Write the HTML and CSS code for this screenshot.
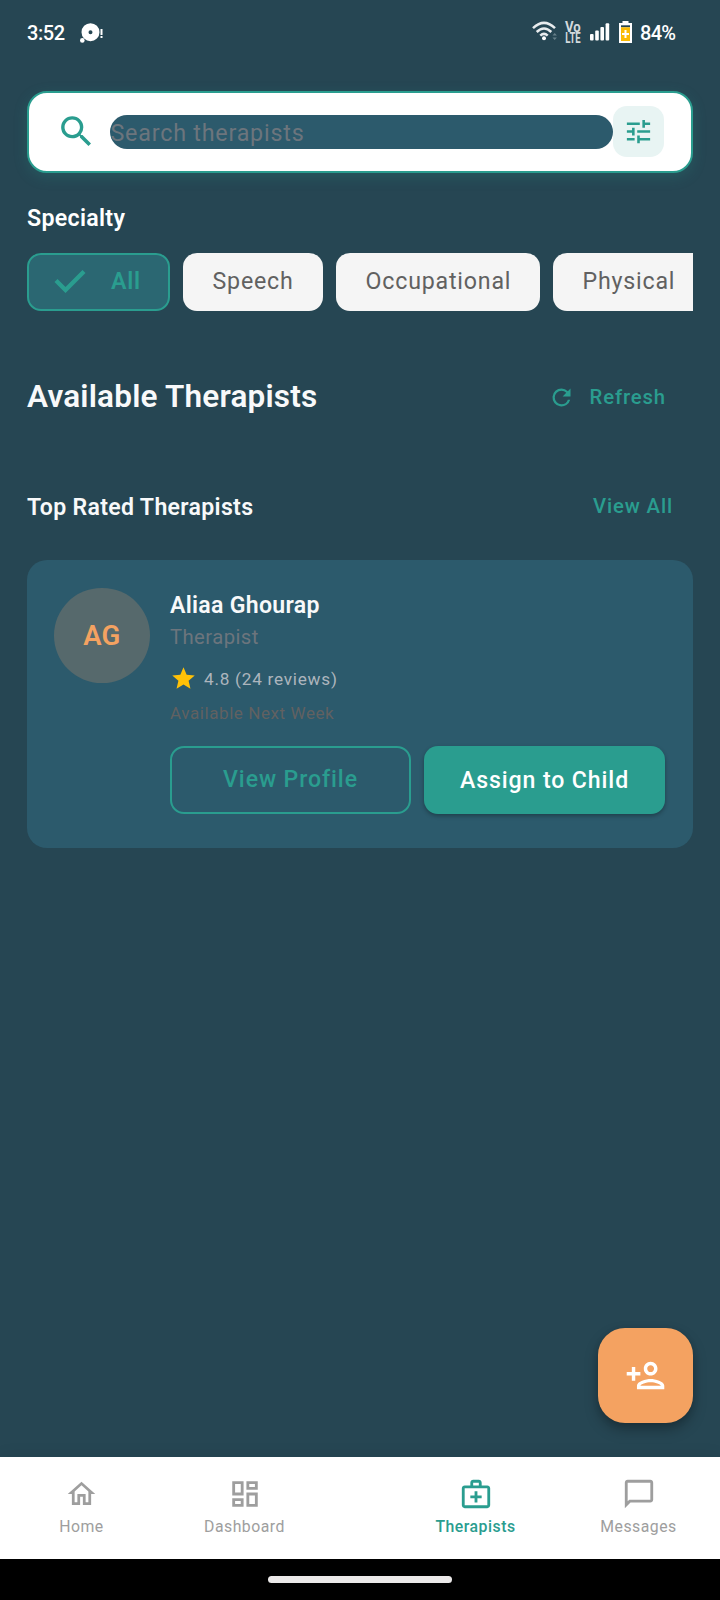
FILE: index.html
```
<!DOCTYPE html>
<html lang="en">
<head>
<meta charset="utf-8">
<title>Therapists</title>
<link rel="stylesheet" href="styles.css">
</head>
<body>
<div class="screen">
  <header class="status">
    <span class="time">3:52</span>
    <svg class="notif" width="26" height="22" viewBox="0 0 26 22" fill="#fff"><path fill-rule="evenodd" d="M10.500 1.200a9 9 0 1 1 0 18a9 9 0 1 1 0-18zm0 7a2 2 0 1 0 0 4a2 2 0 1 0 0-4z"/><circle cx="2.300" cy="18.400" r="2.300"/><path d="M20.500 7h2v6h-2zM20.500 14h2v2h-2z"/></svg>
    <span class="grow"></span>
    <svg class="wifi" width="26" height="22" viewBox="0 0 26 22" fill="none" stroke="#e8ecee" stroke-width="2.500"><path d="M1 7.200Q12 -3.500 23 7.200M4.700 11Q12 4 19.300 11M8.300 14.700Q12 11 15.700 14.700"/><circle cx="12" cy="17.200" r="2" fill="#fff" stroke="none"/><path d="M20.500 14.500L22.700 12l2.200 2.500zM20.500 16.500l2.200 2.500l2.200-2.500z" fill="#67808a" stroke="none"/></svg>
    <svg class="volte" width="17" height="22" viewBox="0 0 17 22"><text transform="translate(0 10.300) scale(.94 1)">Vo</text><text transform="translate(.3 21.300) scale(.68 1)">LTE</text></svg>
    <svg class="signal" width="20" height="18" viewBox="0 0 20 18" fill="#fff"><rect x="0" y="11" width="3.600" height="6.500" rx="1"/><rect x="5.200" y="7.500" width="3.600" height="10" rx="1"/><rect x="10.400" y="4" width="3.600" height="13.500" rx="1"/><rect x="15.600" y="0.300" width="3.600" height="17.200" rx="1"/></svg>
    <svg class="battery" width="13" height="22" viewBox="0 0 13 22"><path d="M3.500 0h6v2H13v20H0V2h3.500z" fill="#fff"/><path d="M2 4.300h9v2H2z" fill="#264653"/><path d="M2 6.300h9V20H2z" fill="#fbbc04"/><path d="M5.500 9h2v3H10v2H7.500v3h-2v-3H3v-2h2.500z" fill="#fff"/></svg>
    <span class="pct">84%</span>
  </header>

  <main class="main">
    <div class="search">
      <svg class="search-icon" viewBox="0 0 24 24" width="41" height="41" fill="#2a9d8f"><path d="M15.500 14h-.79l-.28-.27A6.471 6.471 0 0 0 16 9.500 6.500 6.500 0 1 0 9.500 16c1.610 0 3.090-.59 4.230-1.570l.27.28v.79l5 4.990L20.490 19l-4.990-5zm-6 0C7.010 14 5 11.990 5 9.500S7.010 5 9.500 5 14 7.010 14 9.500 11.990 14 9.500 14z"/></svg>
      <div class="field">Search therapists</div>
      <div class="filter"><svg viewBox="0 0 24 24" width="31" height="31" fill="#2a9d8f"><path d="M3 17v2h6v-2H3zM3 5v2h10V5H3zm10 16v-2h8v-2h-8v-2h-2v6h2zM7 9v2H3v2h4v2h2V9H7zm14 4v-2H11v2h10zm-6-4h2V7h4V5h-4V3h-2v6z"/></svg></div>
    </div>

    <h3 class="label">Specialty</h3>
    <div class="chips">
      <div class="chip chip-on"><svg viewBox="0 0 31 23" width="32" height="23" fill="none" stroke="#2a9d8f" stroke-width="4.300"><path d="M1.500 10.500L11 20L29.500 1.500"/></svg><span>All</span></div>
      <div class="chip w2">Speech</div>
      <div class="chip w3">Occupational</div>
      <div class="chip w4">Physical</div>
    </div>

    <div class="row available">
      <h1 class="title">Available Therapists</h1>
      <div class="link refresh"><svg viewBox="0 0 24 24" width="27" height="27" fill="#2a9d8f"><path d="M17.650 6.350A7.958 7.958 0 0 0 12 4a8 8 0 1 0 7.730 10h-2.080A5.990 5.990 0 0 1 12 18a6 6 0 1 1 0-12c1.660 0 3.140.69 4.220 1.780L13 11h7V4l-2.350 2.350z"/></svg><span>Refresh</span></div>
    </div>
    <div class="row top">
      <h2 class="label2">Top Rated Therapists</h2>
      <div class="link viewall">View All</div>
    </div>

    <article class="card">
      <div class="avatar">AG</div>
      <div class="info">
        <div class="name">Aliaa Ghourap</div>
        <div class="role">Therapist</div>
        <div class="rating"><svg viewBox="0 0 24 24" width="27" height="27" fill="#ffc107"><path d="M12 17.270L18.180 21l-1.640-7.030L22 9.240l-7.190-.61L12 2 9.190 8.630 2 9.240l5.460 4.730L5.820 21z"/></svg><span>4.8 (24 reviews)</span></div>
        <div class="next">Available Next Week</div>
        <div class="actions">
          <div class="btn outline">View Profile</div>
          <div class="btn solid">Assign to Child</div>
        </div>
      </div>
    </article>
    <div class="fab"><svg viewBox="0 0 24 24" width="41" height="41" fill="#fff"><path d="M15 12c2.210 0 4-1.790 4-4s-1.790-4-4-4-4 1.790-4 4 1.790 4 4 4zm0-6c1.100 0 2 .9 2 2s-.9 2-2 2-2-.9-2-2 .9-2 2-2zm0 8c-2.670 0-8 1.340-8 4v2h16v-2c0-2.660-5.330-4-8-4zm-6 4c.22-.72 3.310-2 6-2 2.700 0 5.800 1.290 6 2H9zM6 15v-3h3v-2H6V7H4v3H1v2h3v3z"/></svg></div>
  </main>

  <nav class="nav">
    <div class="tab"><svg viewBox="0 0 24 24" width="33" height="33" fill="currentColor"><path d="M12 5.690l5 4.500V18h-2v-6H9v6H7v-7.810l5-4.500M12 3L2 12h3v8h6v-6h2v6h6v-8h3L12 3z"/></svg><span>Home</span></div>
    <div class="tab"><svg viewBox="0 0 24 24" width="34" height="34" fill="currentColor"><path d="M19 5v2h-4V5h4M9 5v6H5V5h4m10 8v6h-4v-6h4M9 17v2H5v-2h4M21 3h-8v6h8V3zM11 3H3v10h8V3zm10 8h-8v10h8V11zm-10 4H3v6h8v-6z"/></svg><span>Dashboard</span></div>
    <div class="gap"></div>
    <div class="tab active"><svg viewBox="0 0 24 24" width="34" height="34" fill="currentColor"><path d="M20 6h-4V4c0-1.110-.89-2-2-2h-4c-1.110 0-2 .89-2 2v2H4c-1.110 0-2 .89-2 2v12c0 1.110.89 2 2 2h16c1.110 0 2-.89 2-2V8c0-1.110-.89-2-2-2zM10 4h4v2h-4V4zm10 16H4V8h16v12zM13 10h-2v3H8v2h3v3h2v-3h3v-2h-3z"/></svg><span>Therapists</span></div>
    <div class="tab"><svg viewBox="0 0 24 24" width="34" height="34" fill="currentColor"><path d="M20 2H4c-1.100 0-2 .9-2 2v18l4-4h14c1.100 0 2-.9 2-2V4c0-1.100-.9-2-2-2zm0 14H5.170L4 17.170V4h16v12z"/></svg><span>Messages</span></div>
  </nav>
  <div class="system"><div class="handle"></div></div>
</div>
</body>
</html>
```
FILE: styles.css
```
* { box-sizing: border-box; }
body { margin: 0; font-family: Roboto, sans-serif; background: #264653; }
svg { display: block; flex: none; }
h1, h2, h3 { margin: 0; }
.screen { width: 720px; height: 1600px; display: flex; flex-direction: column; overflow: hidden; background: #264653; }
.grow { flex: 1; }

.status { height: 66px; padding: 0 44px 0 27px; display: flex; align-items: center; color: #fff; font-size: 20px; font-weight: 500; }
.time { width: 38px; letter-spacing: -.4px; }
.notif { margin: -1px 0 0 14.5px; }
.wifi { margin-right: 7px; margin-top: -3px; }
.volte { overflow: visible; margin-right: 8px; margin-top: -1px; font: 700 14px Roboto, sans-serif; fill: #d3dadd; }
.signal { margin-right: 9px; margin-top: -3px; }
.battery { margin-right: 8px; margin-top: -2px; }
.pct { width: 36px; letter-spacing: -.7px; white-space: nowrap; }

.main { position: relative; flex: 1; padding: 25px 27px 0; }
.search { height: 82px; border: 2px solid #2a9d8f; border-radius: 20px; background: #fff; box-shadow: 0 4px 14px rgba(42, 157, 143, .22); display: flex; align-items: center; padding: 0 27px; }
.search-icon { margin-top: -1px; }
.field { width: 503px; height: 34px; margin-left: 13px; border-radius: 17px; background: #2c5a6c; color: #6c757d; font-size: 23.3px; line-height: 37px; letter-spacing: .78px; white-space: nowrap; flex: none; text-indent: .5px; }
.filter { width: 51px; height: 51px; margin-top: -1px; border-radius: 14px; background: #e8f4f3; display: flex; align-items: center; justify-content: center; flex: none; }
.label { padding-top: 31px; font-size: 23.2px; line-height: 28px; font-weight: 600; letter-spacing: .3px; color: #fff; }
.chips { margin-top: 21px; height: 58px; display: flex; gap: 13px; overflow: hidden; }
.chip { flex: none; height: 58px; border-radius: 14px; background: #f5f5f5; color: #616161; font-size: 23.2px; letter-spacing: .8px; line-height: 57px; padding-left: 29.5px; }
.chip-on { width: 143px; background: #2b6772; border: 2px solid #2a9d8f; color: #2a9d8f; font-weight: 600; line-height: 52px; padding-left: 24.5px; display: flex; align-items: center; gap: 25.5px; }
.chip-on svg { margin-top: -2px; }
.chip-on span { margin-top: -2px; }
.w2 { width: 140px; }
.w3 { width: 204px; }
.w4 { width: 170px; }

.row { display: flex; align-items: center; justify-content: space-between; height: 50px; }
.available { margin-top: 61px; }
.title { font-size: 31.5px; font-weight: 600; line-height: 36px; letter-spacing: .2px; color: #f8f9fa; }
.link { color: #2a9d8f; font-size: 20.3px; font-weight: 500; letter-spacing: .87px; }
.refresh { display: flex; align-items: center; gap: 15px; padding-right: 27px; }
.top { margin-top: 60px; }
.label2 { font-size: 23.1px; font-weight: 600; letter-spacing: .32px; color: #f8f9fa; }
.viewall { padding-right: 20px; margin-top: -2px; }

.card { margin-top: 28px; height: 287.5px; border-radius: 20px; background: #2c5a6c; padding: 27.5px 27px 0; display: flex; gap: 20.5px; }
.avatar { width: 95.500px; height: 95.500px; border-radius: 50%; background: #56696c; color: #f4a261; font-size: 27.5px; font-weight: 600; line-height: 95px; text-align: center; flex: none; }
.info { flex: 1; padding-top: 4.5px; }
.name { font-size: 23.1px; line-height: 28px; font-weight: 600; letter-spacing: .3px; color: #f8f9fa; }
.role { margin-top: 4px; font-size: 20.3px; line-height: 26px; letter-spacing: .42px; color: #6c757d; }
.rating { margin-top: 15px; height: 27px; display: flex; align-items: center; gap: 7px; font-size: 17.2px; letter-spacing: .75px; color: #adb5bd; }
.next { margin-top: 11px; font-size: 17px; line-height: 20px; letter-spacing: .58px; color: #616161; }
.actions { margin-top: 23px; display: grid; grid-template-columns: 241px 241px; gap: 13px; }
.btn { height: 68px; border-radius: 14px; font-size: 23.1px; font-weight: 500; letter-spacing: .9px; line-height: 69px; text-align: center; }
.outline { border: 2px solid #2a9d8f; color: #2a9d8f; line-height: 64px; }
.solid { background: #2a9d8f; color: #fff; box-shadow: 0 2px 4px rgba(0, 0, 0, .3); }

/* Floating over the page content, bottom right */
.fab { position: absolute; right: 27px; bottom: 34px; width: 95.5px; height: 95.5px; border-radius: 27px; background: #f4a261; display: flex; align-items: center; justify-content: center; box-shadow: 0 7px 14px rgba(0, 0, 0, .26), 0 2px 6px rgba(0, 0, 0, .12); }

.nav { height: 102px; background: #fff; display: flex; box-shadow: 0 -3px 14px rgba(0, 0, 0, .06); }
.tab { width: 163px; padding-top: 20px; display: flex; flex-direction: column; align-items: center; color: #9e9e9e; font-size: 15.8px; letter-spacing: .5px; }
.tab svg { height: 34px; }
.tab span { margin-top: 6px; line-height: 20px; }
.active { color: #2a9d8f; font-weight: 500; }
.gap { width: 68px; }
.system { height: 41px; background: #000; display: flex; justify-content: center; padding-top: 17px; }
.handle { width: 184px; height: 7px; border-radius: 4px; background: #ebe9e9; }
```
